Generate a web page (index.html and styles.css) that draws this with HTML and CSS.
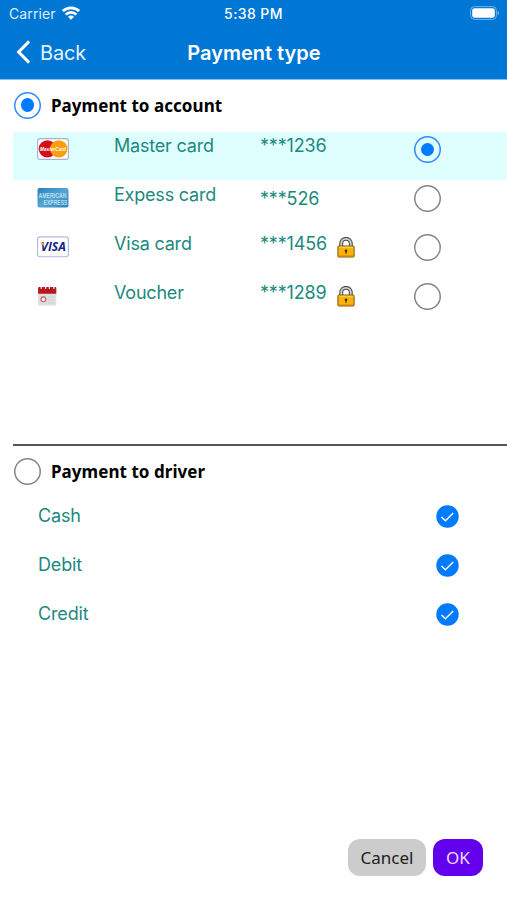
FILE: index.html
```html
<!DOCTYPE html>
<html lang="en">
<head>
<meta charset="utf-8">
<title>Payment type</title>
<link rel="stylesheet" href="styles.css">
</head>
<body>
<svg class="defs" aria-hidden="true">
  <symbol id="lock" viewBox="0 0 18 21">
    <path d="M4.2 10V6.6a4.8 4.8 0 0 1 9.6 0V10" fill="none" stroke="#4e4e4e" stroke-width="4"/>
    <path d="M4.2 10V6.6a4.8 4.8 0 0 1 9.6 0V10" fill="none" stroke="#cfcfcf" stroke-width="1.8"/>
    <rect x=".9" y="9" width="16.2" height="11" rx=".8" fill="#fdb10b" stroke="#7a560c" stroke-width="1"/>
    <path d="M2 10.2h14" stroke="#ffd54a" stroke-width="1"/>
    <path d="M2 18.8h14" stroke="#e88d06" stroke-width="1"/>
    <circle cx="9" cy="13.7" r="1.3" fill="#402b08"/>
    <path d="M9 13.7v3" stroke="#402b08" stroke-width="1.2"/>
  </symbol>
  <symbol id="check" viewBox="0 0 23 23">
    <circle cx="11.5" cy="11.5" r="11.2" fill="#007aff"/>
    <path d="M5.5 12l3.9 3.8L17.2 8" fill="none" stroke="#fff" stroke-width="1.5"/>
  </symbol>
</svg>
<div class="screen">
  <header class="header">
    <div class="status">
      <div class="carrier"><span class="carrier-name">Carrier</span>
        <svg class="wifi" viewBox="0 0 18 14"><g fill="none" stroke="#fff" stroke-width="2.7"><path d="M.9 5.1a11.6 11.6 0 0 1 16.2 0"/><path d="M3.7 8.6a7.5 7.5 0 0 1 10.6 0"/></g><path d="M9 13.8l-3-3a4.2 4.2 0 0 1 6 0z" fill="#fff"/></svg>
      </div>
      <span class="time">5:38 PM</span>
      <svg class="battery" viewBox="0 0 30 14"><rect x=".6" y=".6" width="25.8" height="12.8" rx="3.8" fill="none" stroke="#73b2e8" stroke-width="1"/><rect x="2.2" y="2.2" width="22.6" height="9.6" rx="2.4" fill="#fff"/><path d="M27.6 4.9q1.7.5 1.7 2.1t-1.7 2.1z" fill="#73b2e8"/></svg>
    </div>
    <nav class="nav">
      <a class="back"><svg class="chevron" viewBox="0 0 16 24"><path d="M14.6 1.3L4.2 12l10.4 10.7" fill="none" stroke="#fff" stroke-width="3.1"/></svg><span>Back</span></a>
      <h1 class="title">Payment type</h1>
    </nav>
  </header>
  <main class="content">
    <section class="account">
      <div class="group"><span class="radio checked"></span><h2 class="heading">Payment to account</h2></div>
      <div class="row selected">
        <svg class="card" viewBox="0 0 32 22"><rect x=".6" y=".6" width="30.8" height="20.8" rx="2.5" fill="#fff" stroke="#a4b1cf" stroke-width="1.1"/><circle cx="10.4" cy="10.9" r="8.7" fill="#d50f16"/><circle cx="21.8" cy="10.9" r="8.7" fill="#fb9d0c"/><text class="mc-text" x="3" y="13" textLength="26" lengthAdjust="spacingAndGlyphs">MasterCard</text></svg>
        <span class="name">Master card</span><span class="number">***1236</span><span class="lock"></span><span class="radio checked"></span>
      </div>
      <div class="row">
        <svg class="card" viewBox="0 0 32 22"><defs><linearGradient id="amex" x1="0" y1="0" x2="1" y2="1"><stop offset="0" stop-color="#1f83bd"/><stop offset=".5" stop-color="#57a5d3"/><stop offset="1" stop-color="#2a83b9"/></linearGradient></defs><rect x=".5" y="1" width="31" height="19.6" rx="2" fill="url(#amex)"/><text class="amex-text" x="1.5" y="10.6" textLength="28" lengthAdjust="spacingAndGlyphs">AMERICAN</text><text class="amex-text" x="6.5" y="17.6" textLength="24" lengthAdjust="spacingAndGlyphs">EXPRESS</text></svg>
        <span class="name">Expess card</span><span class="number lower">***526</span><span class="lock"></span><span class="radio"></span>
      </div>
      <div class="row">
        <svg class="card" viewBox="0 0 32 22"><rect x=".6" y=".9" width="30.8" height="19.8" rx="2.5" fill="#fff" stroke="#b4b9de" stroke-width="1.1"/><text class="visa-text" x="3.8" y="15.4" textLength="25" lengthAdjust="spacingAndGlyphs">VISA</text><path d="M3 6.5h3.2l1.3 4.2z" fill="#f4aa25"/></svg>
        <span class="name">Visa card</span><span class="number">***1456</span><svg class="lock"><use href="#lock"/></svg><span class="radio"></span>
      </div>
      <div class="row">
        <svg class="card" viewBox="0 0 32 22"><rect x="1.1" y="3" width="18.2" height="17.6" rx="1.5" fill="#dedede"/><path d="M1.1 8.8V3q0-1 1-1h1.5v2h1.2v-2H8v2h1.2v-2h2.6v2H13v-2h3.3v2h1.2v-2h.8q1 0 1 1v5.8z" fill="#b6181e"/><circle cx="6.4" cy="14.3" r="2.4" fill="#f6eded" stroke="#c75b62" stroke-width="1.1"/><path d="M11 12h6M11 15h6M11 18h6" stroke="#d0d0d0" stroke-width=".8"/></svg>
        <span class="name">Voucher</span><span class="number">***1289</span><svg class="lock"><use href="#lock"/></svg><span class="radio"></span>
      </div>
    </section>
    <section class="driver">
      <div class="group"><span class="radio"></span><h2 class="heading">Payment to driver</h2></div>
      <div class="option"><span>Cash</span><svg class="check"><use href="#check"/></svg></div>
      <div class="option"><span>Debit</span><svg class="check"><use href="#check"/></svg></div>
      <div class="option"><span>Credit</span><svg class="check"><use href="#check"/></svg></div>
    </section>
  </main>
  <footer class="footer"><button class="button cancel">Cancel</button><button class="button ok">OK</button></footer>
</div>
</body>
</html>
```
FILE: styles.css
```css
* { box-sizing: border-box; }
body { margin: 0; background: #fff; }
.defs { display: none; }
.screen { width: 507px; height: 900px; display: flex; flex-direction: column; font-family: Inter, "Liberation Sans", sans-serif; overflow: hidden; }
svg { flex: none; display: block; }

.header { height: 80px; background: #0077d4; border-bottom: 1px solid #7fc0f2; color: #fff; }
.status { height: 27px; display: grid; grid-template-columns: 1fr auto 1fr; align-items: center; padding: 0 7px 1px 9px; font-size: 14px; }
.carrier { display: flex; align-items: center; gap: 6px; }
.carrier-name { color: #dceefb; letter-spacing: .1px; }
.wifi { width: 18px; height: 14px; margin-top: -1px; }
.time { font-weight: 500; letter-spacing: .4px; margin-right: 2px; }
.battery { width: 30px; height: 14px; justify-self: end; }
.nav { height: 52px; display: grid; grid-template-columns: 1fr auto 1fr; align-items: center; padding: 0 0 0 14px; }
.back { display: flex; align-items: center; gap: 9px; font-size: 20px; letter-spacing: -.2px; color: #e4f3ff; }
.chevron { width: 17px; height: 24px; margin-top: -2px; }
.title { margin: 0 13px 0 0; font-size: 20px; font-weight: 600; }

.content { flex: 1; padding-left: 13px; }
.account { height: 366px; border-bottom: 2px solid #555; }
.group { height: 52px; display: flex; align-items: center; gap: 10px; padding: 0 0 2px 1px; }
.heading { margin: 0; font: bold 17px "Noto Sans", sans-serif; letter-spacing: .05px; }
.radio { flex: none; display: flex; align-items: center; justify-content: center; width: 27px; height: 27px; border-radius: 50%; box-shadow: inset 0 0 0 1.5px #858585; }
.radio.checked { box-shadow: inset 0 0 0 1.5px #328aff; background: #fff; }
.radio.checked::after { content: ""; width: 13.5px; height: 13.5px; border-radius: 50%; background: #007aff; }
.row { height: 48px; margin-bottom: 1px; padding: 4px 0 0 24px; display: grid; grid-template-columns: 77px 146px 77px 77px 27px; align-items: start; font-size: 18px; line-height: 20px; color: #20897f; }
.row.selected { background: #dfffff; }
.row .radio { background: none; }
.name { letter-spacing: -.2px; }
.number { letter-spacing: -.15px; }
.card { width: 32px; height: 22px; margin-top: 2px; overflow: visible; }
.number.lower { padding-top: 4px; }
.lock { width: 18px; height: 21px; margin-top: 3px; }
.mc-text { font: italic bold 6px "Liberation Sans", sans-serif; fill: #fff; }
.amex-text { font: bold 7.4px "Liberation Sans", sans-serif; fill: #b9dcf0; }
.visa-text { font: italic bold 13px "Open Sans", sans-serif; fill: #14248e; }

.driver .group { height: 50px; padding: 0 0 0 1px; }
.option { height: 49px; display: flex; justify-content: space-between; align-items: start; padding: 9px 48px 0 25px; font-size: 18px; line-height: 22px; letter-spacing: -.15px; color: #20897f; }
.check { width: 23px; height: 23px; }

.footer { display: flex; justify-content: flex-end; gap: 7px; height: 61px; padding-right: 24px; }
.button { height: 37px; padding: 0 0 1px; border: 0; border-radius: 12px; font: 17px "Noto Sans", sans-serif; }
.cancel { width: 78px; background: #ccc; color: #222; }
.ok { width: 50px; background: #6200ee; color: #f0dcff; }
```
